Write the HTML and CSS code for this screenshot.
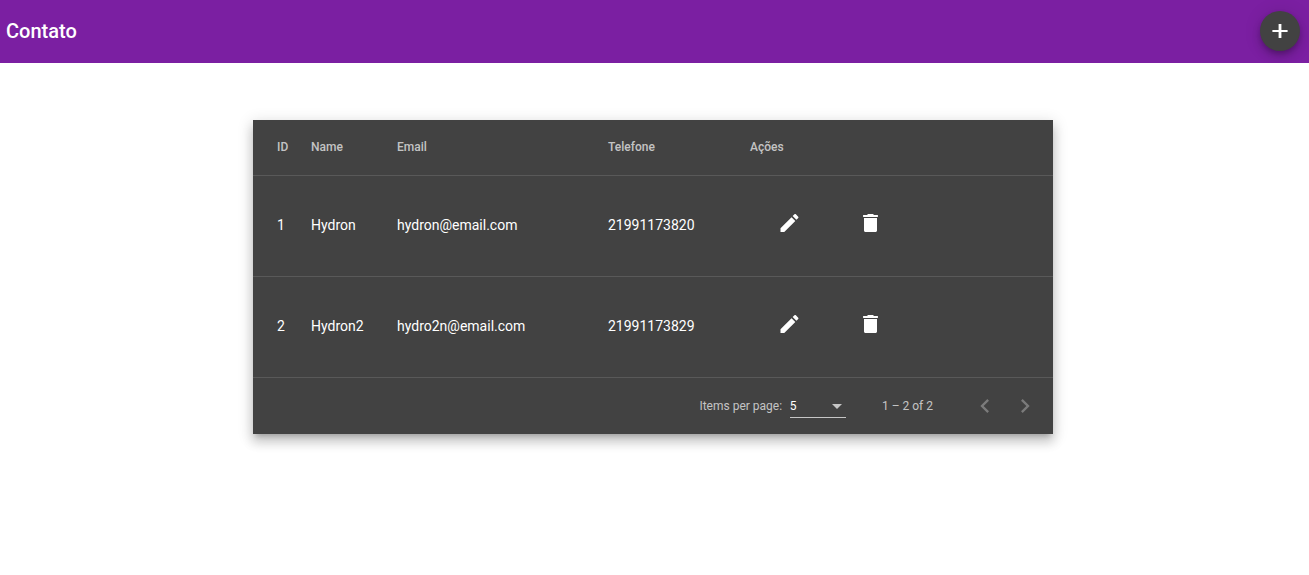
FILE: index.html
```html
<!DOCTYPE html>
<html lang="pt-BR">
<head>
<meta charset="utf-8">
<title>Contato</title>
<link rel="stylesheet" href="styles.css">
</head>
<body>
<header class="toolbar">
  <h1 class="title">Contato</h1>
  <button class="fab" aria-label="Adicionar"><svg class="icon" viewBox="0 0 24 24"><path d="M19.6 13h-6.2v6h-2.8v-6H4.4v-2h6.2V5h2.8v6h6.2v2z"/></svg></button>
</header>
<main class="card">
  <div class="row head"><span>ID</span><span>Name</span><span>Email</span><span>Telefone</span><span>Ações</span></div>
  <div class="row"><span>1</span><span>Hydron</span><span>hydron@email.com</span><span>21991173820</span>
    <div class="actions">
      <svg class="icon" viewBox="0.5 0 24 24"><path d="M3 17.25V21h3.75L17.81 9.94l-3.75-3.75L3 17.25zM20.71 7.04c.39-.39.39-1.02 0-1.41l-2.34-2.34c-.39-.39-1.02-.39-1.41 0l-1.83 1.83 3.75 3.75 1.83-1.83z"/></svg>
      <svg class="icon" viewBox="0.5 0 24 24"><path d="M5.5 19.5c0 .8.7 1.5 1.5 1.5h10c.8 0 1.5-.7 1.5-1.5V7h-13v12.5zM19.4 4h-3.9l-1-1h-5l-1 1H4.6v2h14.8V4z"/></svg>
    </div></div>
  <div class="row"><span>2</span><span>Hydron2</span><span>hydro2n@email.com</span><span>21991173829</span>
    <div class="actions">
      <svg class="icon" viewBox="0.5 0 24 24"><path d="M3 17.25V21h3.75L17.81 9.94l-3.75-3.75L3 17.25zM20.71 7.04c.39-.39.39-1.02 0-1.41l-2.34-2.34c-.39-.39-1.02-.39-1.41 0l-1.83 1.83 3.75 3.75 1.83-1.83z"/></svg>
      <svg class="icon" viewBox="0.5 0 24 24"><path d="M5.5 19.5c0 .8.7 1.5 1.5 1.5h10c.8 0 1.5-.7 1.5-1.5V7h-13v12.5zM19.4 4h-3.9l-1-1h-5l-1 1H4.6v2h14.8V4z"/></svg>
    </div></div>
  <footer class="paginator">
    <span>Items per page:</span>
    <div class="select"><span>5</span><i class="arrow"></i></div>
    <span class="range">1 – 2 of 2</span>
    <div class="nav">
      <svg class="chevron" viewBox="0 0 24 24"><path d="M15.41 7.41L14 6l-6 6 6 6 1.41-1.41L10.83 12z"/></svg>
      <svg class="chevron" viewBox="0 0 24 24"><path d="M10 6L8.59 7.41 13.17 12l-4.58 4.59L10 18l6-6z"/></svg>
    </div>
  </footer>
</main>
</body>
</html>
```

FILE: styles.css
```css
* { box-sizing: border-box; }
body { min-height: 100vh; margin: 0; background: #fff; color: #fff; font: 14px Roboto, sans-serif; display: flow-root; }
.toolbar { display: flex; align-items: center; justify-content: space-between; height: 63px; padding: 0 9px 1px 6px; background: #7b1fa2; }
.title { margin: 0; font-size: 20px; font-weight: 500; line-height: 32px; }
.fab { display: flex; align-items: center; justify-content: center; width: 40px; height: 40px; padding: 0; border: 0; border-radius: 50%; background: #424242; box-shadow: 0 3px 5px -1px rgba(0,0,0,.2), 0 6px 10px rgba(0,0,0,.14), 0 1px 18px rgba(0,0,0,.12); clip-path: inset(-20px -20px -12px -20px); }
.icon { display: block; width: 24px; height: 24px; fill: #fff; }
.card { width: 800px; margin: 57px 0 0 253px; background: #424242; box-shadow: 0 5px 5px -3px rgba(0,0,0,.2), 0 8px 10px 1px rgba(0,0,0,.14), 0 3px 14px 2px rgba(0,0,0,.12); }
.row { display: grid; grid-template-columns: 34px 86px 211px 142px 1fr; align-items: center; height: 101px; padding: 0 24px; border-bottom: 1px solid rgba(255,255,255,.12); line-height: 20px; }
.row > span { padding-bottom: 2px; }
.head { height: 56px; font-size: 12px; font-weight: 500; color: rgba(255,255,255,.7); }
.actions { display: flex; gap: 57px; padding: 0 0 6px 28px; }
.paginator { display: flex; align-items: center; height: 56px; padding-left: 446.4px; font-size: 12px; color: rgba(255,255,255,.7); }
.select { display: flex; align-items: center; justify-content: space-between; width: 56px; height: 24px; margin-left: 7.6px; padding-right: 4px; border-bottom: 1px solid rgba(255,255,255,.7); color: #fff; }
.arrow { margin-top: 2px; border: 5px solid transparent; border-top-color: rgba(255,255,255,.7); border-bottom: 0; }
.range { margin-left: 36.3px; }
.nav { display: flex; margin-left: 31.7px; }
.chevron { width: 28px; height: 28px; margin: 0 6px; fill: rgba(255,255,255,.3); }
```
